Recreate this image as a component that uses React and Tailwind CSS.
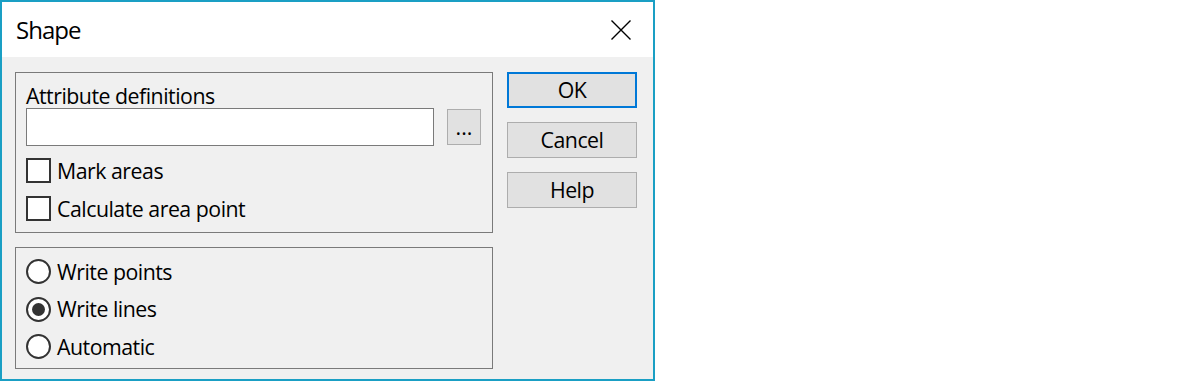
import { useState } from 'react';

const FONT = "font-['Open_Sans','Noto_Sans',sans-serif]";

const Checkbox = ({ label, checked, onChange }) => (
  <label className="flex items-center h-[25px] cursor-default select-none">
    <span
      className="w-[25px] h-[25px] border-2 border-[#333333] bg-white flex items-center justify-center"
      onClick={onChange}
    >
      {checked && (
        <svg width="16" height="16" viewBox="0 0 16 16">
          <path d="M2 8.5 L6 12.5 L14 3.5" fill="none" stroke="#333" strokeWidth="2" />
        </svg>
      )}
    </span>
    <span className="ml-[6px] text-[21.33px] leading-none tracking-[-0.5px] text-black">{label}</span>
  </label>
);

const Radio = ({ label, checked, onChange }) => (
  <label className="flex items-center h-[25px] cursor-default select-none" onClick={onChange}>
    <span className="w-[25px] h-[25px] rounded-full border-2 border-[#333333] bg-white flex items-center justify-center">
      {checked && <span className="w-[13px] h-[13px] rounded-full bg-[#333333]" />}
    </span>
    <span className="ml-[6px] text-[21.33px] leading-none tracking-[-0.5px] text-black">{label}</span>
  </label>
);

const Button = ({ children, primary }) => (
  <button
    className={`w-[130px] h-[36px] bg-[#e1e1e1] text-[21.33px] leading-none tracking-[-0.5px] text-black flex items-center justify-center ${
      primary ? 'border-2 border-[#0078d7]' : 'border border-[#adadad]'
    }`}
  >
    {children}
  </button>
);

export default function App() {
  const [markAreas, setMarkAreas] = useState(false);
  const [calcPoint, setCalcPoint] = useState(false);
  const [mode, setMode] = useState('lines');

  return (
    <div className={`${FONT} bg-white w-[1200px] h-[382px]`}>
      <div className="w-[655px] h-[381px] border-2 border-[#1a9fc4] flex flex-col">
        {/* title bar */}
        <div className="h-[55px] bg-white flex items-center justify-between pl-[14px] pr-[22px]">
          <span className="text-[24px] leading-none tracking-[-1px] text-black">Shape</span>
          <svg width="20" height="20" viewBox="0 0 20 20">
            <path d="M0.5 0.5 L19.5 19.5 M19.5 0.5 L0.5 19.5" stroke="#000" strokeWidth="1.4" fill="none" />
          </svg>
        </div>

        {/* body */}
        <div className="flex-1 bg-[#f0f0f0] flex pl-[13px] pt-[15px]">
          <div className="w-[478px] flex flex-col gap-[14px]">
            <div className="h-[161px] border border-[#7a7a7a] pl-[10px] pt-[11px]">
              <div className="text-[21.33px] leading-[24px] tracking-[-0.5px] text-black">Attribute definitions</div>
              <div className="flex items-start">
                <div className="w-[408px] h-[38px] bg-white border border-[#7a7a7a]" />
                <button className="ml-[13px] mt-[1px] w-[34px] h-[36px] bg-[#e1e1e1] border border-[#adadad] text-[21.33px] leading-none text-black flex items-center justify-center">
                  ...
                </button>
              </div>
              <div className="mt-[12px] flex flex-col gap-[13px]">
                <Checkbox label="Mark areas" checked={markAreas} onChange={() => setMarkAreas(!markAreas)} />
                <Checkbox label="Calculate area point" checked={calcPoint} onChange={() => setCalcPoint(!calcPoint)} />
              </div>
            </div>

            <div className="h-[122px] border border-[#7a7a7a] pl-[10px] pt-[11px] flex flex-col gap-[12.5px]">
              <Radio label="Write points" checked={mode === 'points'} onChange={() => setMode('points')} />
              <Radio label="Write lines" checked={mode === 'lines'} onChange={() => setMode('lines')} />
              <Radio label="Automatic" checked={mode === 'auto'} onChange={() => setMode('auto')} />
            </div>
          </div>

          <div className="ml-[14px] flex flex-col gap-[14px]">
            <Button primary>OK</Button>
            <Button>Cancel</Button>
            <Button>Help</Button>
          </div>
        </div>
      </div>
    </div>
  );
}
